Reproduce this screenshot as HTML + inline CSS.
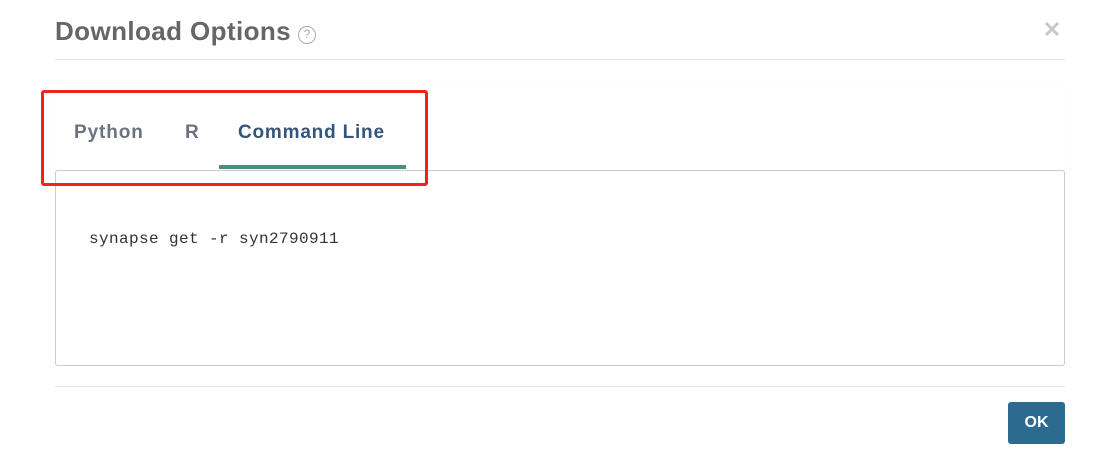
<!DOCTYPE html>
<html><head><style>
body{margin:0;width:1111px;height:461px;background:#fff;position:relative;overflow:hidden;font-family:"Liberation Sans",sans-serif}
.a{position:absolute}
</style></head><body>
<div class="a" style="left:55px;top:16px;font-size:26px;font-weight:bold;color:#666;letter-spacing:0.4px">Download Options</div>
<div class="a" style="left:298px;top:26px;width:18px;height:18px;border:1.5px solid #aaa;border-radius:50%;font-size:12px;color:#aaa;text-align:center;line-height:15px;box-sizing:border-box">?</div>
<svg class="a" style="left:1044px;top:21px" width="16" height="16"><path d="M2 2L14 14M14 2L2 14" stroke="#c8c8c8" stroke-width="3"/></svg>
<div class="a" style="left:55px;top:59px;width:1010px;height:1px;background:#e3e3e3"></div>
<div class="a" style="left:55px;top:86px;width:1010px;height:84px;background:#fff;box-shadow:0 0 3px rgba(0,0,0,0.04)"></div>
<div class="a" style="left:74px;top:122px;font-size:19px;font-weight:bold;color:#6b7280;letter-spacing:0.9px">Python</div>
<div class="a" style="left:185px;top:122px;font-size:19px;font-weight:bold;color:#6b7280">R</div>
<div class="a" style="left:238px;top:122px;font-size:19px;font-weight:bold;color:#34567a;letter-spacing:0.8px">Command Line</div>
<div class="a" style="left:219px;top:165px;width:187px;height:4px;background:#4a8c7e"></div>
<div class="a" style="left:55px;top:170px;width:1010px;height:196px;border:1px solid #ccc;border-radius:3px;box-sizing:border-box"></div>
<div class="a" style="left:89px;top:230px;font-family:'Liberation Mono',monospace;font-size:16px;letter-spacing:0.4px;color:#333">synapse get -r syn2790911</div>
<div class="a" style="left:55px;top:386px;width:1010px;height:1px;background:#e3e3e3"></div>
<div class="a" style="left:1008px;top:402px;width:57px;height:42px;background:#2c6a8f;border-radius:3px;color:#fff;font-weight:bold;font-size:16px;text-align:center;line-height:42px">OK</div>
<div class="a" style="left:41px;top:90px;width:387px;height:96px;border:3px solid #f5221b;border-radius:3px;box-sizing:border-box"></div>
</body></html>
